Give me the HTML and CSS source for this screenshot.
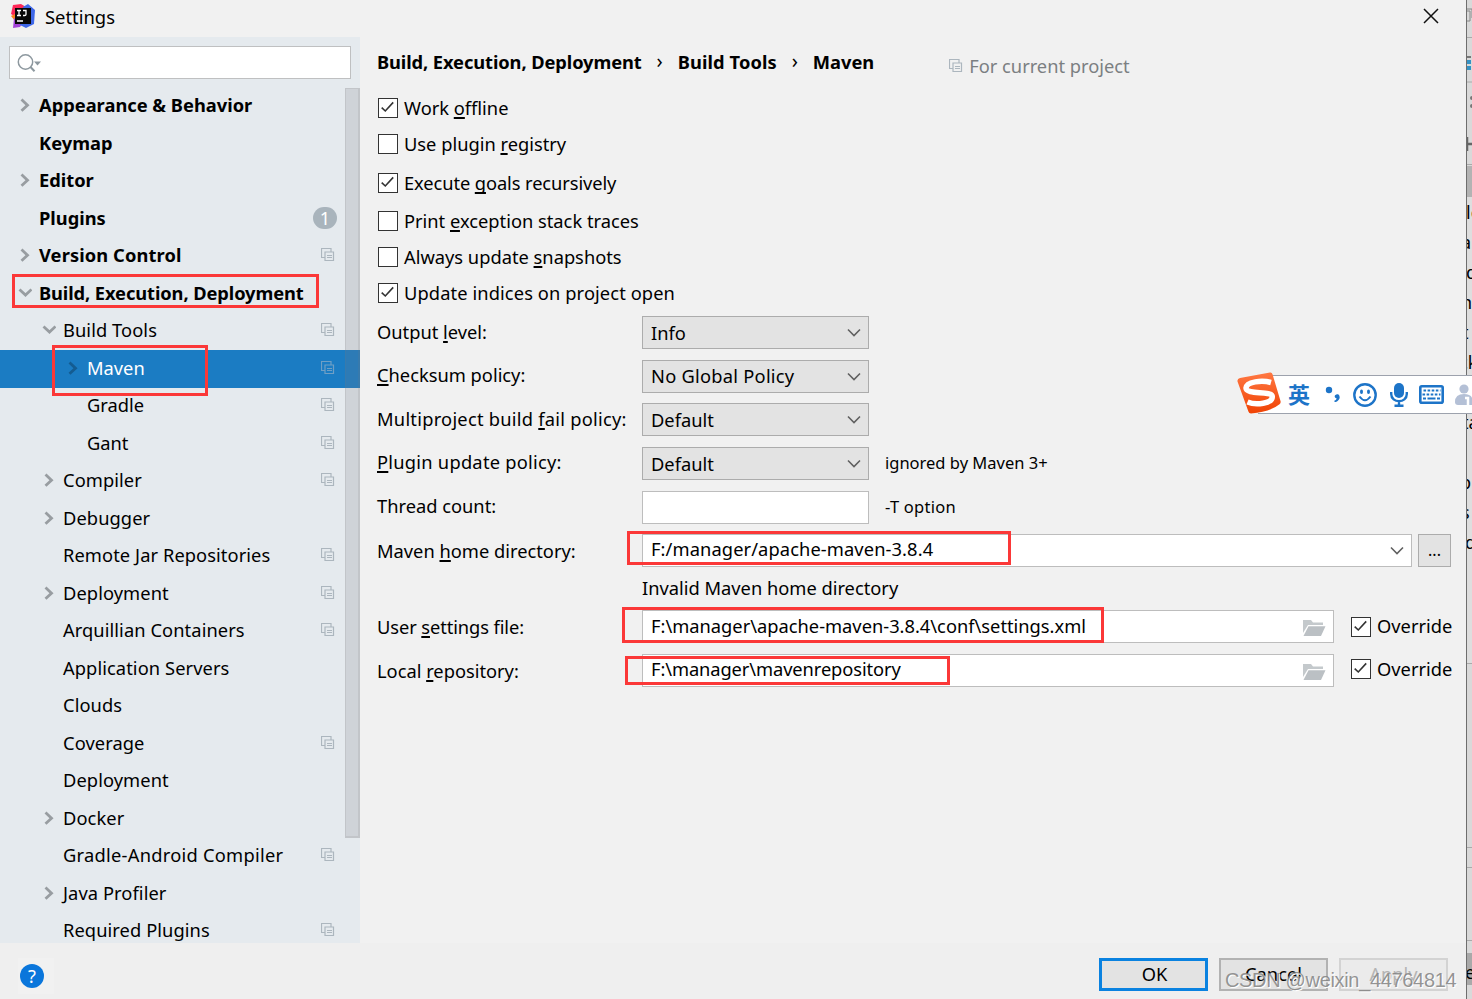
FILE: index.html
```html
<!DOCTYPE html>
<html lang="en">
<head>
<meta charset="utf-8">
<title>Settings</title>
<link rel="stylesheet" href="styles.css">
</head>
<body>
<svg class="defs" aria-hidden="true">
  <symbol id="right" viewBox="0 0 14 14"><path d="M3.500 1.600 9.500 7.200l-6 5.600" fill="none" stroke="currentColor" stroke-width="2.800"/></symbol>
  <symbol id="down" viewBox="0 0 14 14"><path d="M1.500 3.400 7.500 9l6-5.600" fill="none" stroke="currentColor" stroke-width="2.800"/></symbol>
  <symbol id="copy" viewBox="0 0 14 14"><path d="M3.500 9.500H.5v-9h9.500v3M4 4h8.500v8.500H4zM6 7.500h5M6 9.500h5" fill="none" stroke="currentColor" stroke-width="1.200"/></symbol>
  <symbol id="check" viewBox="0 0 20 20"><path d="M3 9.500 7 13.300 15.800 3.800" fill="none" stroke="#333" stroke-width="1.800"/></symbol>
  <symbol id="arrow" viewBox="0 0 14 9"><path d="M1 1.500l6 6 6-6" fill="none" stroke="#606060" stroke-width="1.600"/></symbol>
  <symbol id="folder" viewBox="0 0 24 18"><path d="M1 1h8l2 2.500h10V6H6L1 14z" fill="#c4c9cc"/><path d="M6.500 7.200H23.500L19 17H1.500z" fill="#bbc0c4"/></symbol>
</svg>
<div class="dialog">
  <header class="titlebar">
    <svg class="logo" viewBox="0 0 24 24">
      <path d="M2 1 10 0l5 3L5 13 0 10z" fill="#fe2857"/><path d="M0 12l4-2v7z" fill="#fc801d"/><path d="M3 14l8 6-2 3-7 1z" fill="#a445d8"/><path d="M12 3l5-3 7 6-1 14-8 4-6-3z" fill="#3e67e8"/>
      <path d="M4 4h16v16H4z" fill="#080808"/><path d="M6 6.500h4M8 6.500v5M6 11.500h4M12 6.500h3v4q0 1-1.500 1h-1.500M6 17h6" fill="none" stroke="#fff" stroke-width="1.300"/>
    </svg>
    <h1>Settings</h1>
    <svg class="close" viewBox="0 0 16 16"><path d="M1 1l14 14M15 1 1 15" stroke="#111" stroke-width="1.500"/></svg>
  </header>
  <div class="body">
    <aside class="sidebar">
      <div class="search"><svg viewBox="0 0 26 20"><circle cx="8.500" cy="8" r="7.200" fill="none" stroke="#8d989f" stroke-width="1.500"/><path d="M13.500 13l4 4.200" stroke="#8d989f" stroke-width="2"/><path d="M17 7.500h7l-3.500 4z" fill="#8d989f"/></svg></div>
      <ul class="tree">
        <li class="top"><svg class="tw"><use href="#right"/></svg><span>Appearance &amp; Behavior</span></li>
        <li class="top"><i class="tw"></i><span>Keymap</span></li>
        <li class="top"><svg class="tw"><use href="#right"/></svg><span>Editor</span></li>
        <li class="top"><i class="tw"></i><span>Plugins</span><b class="badge">1</b></li>
        <li class="top"><svg class="tw"><use href="#right"/></svg><span class="loose">Version Control</span><svg class="cp"><use href="#copy"/></svg></li>
        <li class="top"><svg class="tw"><use href="#down"/></svg><span class="tight">Build, Execution, Deployment</span></li>
        <li class="sub"><svg class="tw"><use href="#down"/></svg><span>Build Tools</span><svg class="cp"><use href="#copy"/></svg></li>
        <li class="leaf selected"><svg class="tw"><use href="#right"/></svg><span>Maven</span><svg class="cp"><use href="#copy"/></svg></li>
        <li class="leaf"><i class="tw"></i><span>Gradle</span><svg class="cp"><use href="#copy"/></svg></li>
        <li class="leaf"><i class="tw"></i><span>Gant</span><svg class="cp"><use href="#copy"/></svg></li>
        <li class="sub"><svg class="tw"><use href="#right"/></svg><span>Compiler</span><svg class="cp"><use href="#copy"/></svg></li>
        <li class="sub"><svg class="tw"><use href="#right"/></svg><span>Debugger</span></li>
        <li class="sub"><i class="tw"></i><span>Remote Jar Repositories</span><svg class="cp"><use href="#copy"/></svg></li>
        <li class="sub"><svg class="tw"><use href="#right"/></svg><span>Deployment</span><svg class="cp"><use href="#copy"/></svg></li>
        <li class="sub"><i class="tw"></i><span>Arquillian Containers</span><svg class="cp"><use href="#copy"/></svg></li>
        <li class="sub"><i class="tw"></i><span>Application Servers</span></li>
        <li class="sub"><i class="tw"></i><span>Clouds</span></li>
        <li class="sub"><i class="tw"></i><span>Coverage</span><svg class="cp"><use href="#copy"/></svg></li>
        <li class="sub"><i class="tw"></i><span>Deployment</span></li>
        <li class="sub"><svg class="tw"><use href="#right"/></svg><span>Docker</span></li>
        <li class="sub"><i class="tw"></i><span class="wide">Gradle-Android Compiler</span><svg class="cp"><use href="#copy"/></svg></li>
        <li class="sub"><svg class="tw"><use href="#right"/></svg><span>Java Profiler</span></li>
        <li class="sub"><i class="tw"></i><span>Required Plugins</span><svg class="cp"><use href="#copy"/></svg></li>
      </ul>
      <div class="scrollbar"></div>
    </aside>
    <main class="content">
      <div class="crumbs">
        <b class="tight">Build, Execution, Deployment</b><i>›</i><b class="loose">Build Tools</b><i>›</i><b>Maven</b>
        <span class="scope"><svg class="cp"><use href="#copy"/></svg>For current project</span>
      </div>
      <div class="checks">
        <label><svg class="box"><use href="#check"/></svg><span>Work <u>o</u>ffline</span></label>
        <label><svg class="box"></svg><span>Use plugin <u>r</u>egistry</span></label>
        <label><svg class="box"><use href="#check"/></svg><span class="tight">Execute <u>g</u>oals recursively</span></label>
        <label><svg class="box"></svg><span>Print <u>e</u>xception stack traces</span></label>
        <label><svg class="box"></svg><span>Always update <u>s</u>napshots</span></label>
        <label><svg class="box"><use href="#check"/></svg><span class="loose">Update indices on project open</span></label>
      </div>
      <div class="form">
        <div class="row"><span class="name">Output <u>l</u>evel:</span><div class="field select">Info<svg class="arrow"><use href="#arrow"/></svg></div></div>
        <div class="row"><span class="name"><u>C</u>hecksum policy:</span><div class="field select wide">No Global Policy<svg class="arrow"><use href="#arrow"/></svg></div></div>
        <div class="row"><span class="name wide">Multiproject build <u>f</u>ail policy:</span><div class="field select">Default<svg class="arrow"><use href="#arrow"/></svg></div></div>
        <div class="row"><span class="name wide lift"><u>P</u>lugin update policy:</span><div class="field select">Default<svg class="arrow"><use href="#arrow"/></svg></div><small class="lift">ignored by Maven 3+</small></div>
        <div class="row"><span class="name">Thread count:</span><div class="field short"></div><small class="wide">-T option</small></div>
        <div class="row"><span class="name drop">Maven <u>h</u>ome directory:</span><div class="field home"><span class="loose">F:/manager/apache-maven-3.8.4</span><svg class="arrow"><use href="#arrow"/></svg></div><div class="browse">...</div></div>
        <div class="row error"><span class="name"></span><span class="lift">Invalid Maven home directory</span></div>
        <div class="row"><span class="name drop tight">User <u>s</u>ettings file:</span><div class="field path"><span class="drop">F:\manager\apache-maven-3.8.4\conf\settings.xml</span><svg class="folder"><use href="#folder"/></svg></div><label><svg class="box"><use href="#check"/></svg><span>Override</span></label></div>
        <div class="row"><span class="name drop2">Local <u>r</u>epository:</span><div class="field path"><span class="tight">F:\manager\mavenrepository</span><svg class="folder"><use href="#folder"/></svg></div><label class="lift"><svg class="box"><use href="#check"/></svg><span>Override</span></label></div>
      </div>
    </main>
  </div>
  <footer class="footer">
    <div class="helpbox"><span class="help">?</span></div>
    <div class="buttons"><div class="btn ok">OK</div><div class="btn">Cancel</div><div class="btn off">Apply</div></div>
  </footer>
</div>
<svg class="behind" viewBox="1466 0 6 999">
  <path d="M1466 0h6v999h-6z" fill="#d9d9d9"/>
  <path d="M1466 166h6v31h-6z" fill="#b3b3b3"/><path d="M1466 197h6v466h-6z" fill="#dedede"/>
  <path d="M1466 37.500h6M1466 82h6M1466 164.500h6M1466 663.500h6M1466 847.500h6M1466 867.500h6M1466 940.500h6" stroke="#aaa"/>
  <path d="M1466 953h6v32h-6z" fill="#a9a9a9"/>
  <path d="M1467 11h3v10h-3M1466 9h6v9" fill="none" stroke="#888"/>
  <path d="M1466 56h5v2h-5z" fill="#777"/><path d="M1467 60h4v4h-4zM1467 66h4v4h-4z" fill="#3592c4"/>
  <circle cx="1472" cy="98" r="2" fill="#777"/><circle cx="1472" cy="106" r="2" fill="#777"/>
  <path d="M1467 137v14M1467 144h5" stroke="#666" stroke-width="2.500"/>
  <g class="page-text"><text x="1466" y="219">le</text><text x="1461" y="249">a</text><text x="1466" y="279">d</text><text x="1461" y="309">n</text><text x="1462" y="339">t</text><text x="1459" y="369">ck</text><text x="1462" y="429">ta</text><text x="1460" y="489">p</text><text x="1461" y="519">s</text><text x="1465" y="549">d</text><text x="1465" y="979">e</text></g>
  <path d="M1466.500 0v999" stroke="#6e6e6e"/>
</svg>
<div class="mark m1"></div><div class="mark m2"></div><div class="mark m3"></div><div class="mark m4"></div><div class="mark m5"></div>
<div class="ime">
  <svg class="sogou" viewBox="0 0 44 42"><defs><linearGradient id="g" x2="0" y2="1"><stop stop-color="#ff7843"/><stop offset="1" stop-color="#f04304"/></linearGradient></defs>
    <path d="M3 6 33 .500q2-.3 2.500 1.700L43.500 29q.6 2-1 3.200Q33 40 14 41.500q-2 0-2.600-2L.5 9.500Q0 6.700 3 6z" fill="url(#g)"/>
    <path d="M34 10.500C25 8 9.500 9.500 9 16 8.800 23 35 18.500 35.300 24.500 35.500 31.500 19 33.500 10.500 30" fill="none" stroke="#fff" stroke-width="5.500"/></svg>
  <span class="lang">英</span>
  <svg class="punct" viewBox="0 0 16 18"><circle cx="4" cy="4" r="3.200" fill="#1d74c8"/><path d="M13.500 8.500c3 3-.2 7.500-4 7.500v-1.500c1.500-.4 2.200-1.400 2-2.300-3.500-.8-1.400-4.800 2-3.700z" fill="#1d74c8"/></svg>
  <svg class="smile" viewBox="0 0 24 24"><circle cx="12" cy="12" r="10.700" fill="none" stroke="#1d74c8" stroke-width="2.400"/><ellipse cx="8.500" cy="8.700" rx="1.500" ry="2.200" fill="#1d74c8"/><ellipse cx="15.500" cy="8.700" rx="1.500" ry="2.200" fill="#1d74c8"/><path d="M6.500 13.500q5.500 7.500 11 0" fill="none" stroke="#1d74c8" stroke-width="2"/></svg>
  <svg class="mic" viewBox="0 0 18 24"><rect x="4" width="10" height="15" rx="5" fill="#1d74c8"/><path d="M1.200 9v2c0 9.500 15.600 9.500 15.600 0V9M9 18v4M4.500 22.800h9" fill="none" stroke="#1d74c8" stroke-width="2.400"/></svg>
  <svg class="keys" viewBox="0 0 25 19"><rect x="1.300" y="1.300" width="22.400" height="16.400" rx="1.500" fill="#fff" stroke="#1d74c8" stroke-width="2.600"/><path d="M4.500 5.500h17M3.500 9.500h18" stroke="#1d74c8" stroke-width="2.200" stroke-dasharray="2.600 1.500"/><path d="M4 13.500h3M8.500 13.500h8M18 13.500h3" stroke="#1d74c8" stroke-width="2"/></svg>
  <svg class="user" viewBox="0 0 17 22"><circle cx="9" cy="5" r="4.600" fill="#b4c0d6"/><path d="M0 18q0-8 9-8t9 8v3H3q-3 0-3-3z" fill="#b4c0d6"/><path d="M10 14h3v7" fill="none" stroke="#fff" stroke-width="2.500"/></svg>
</div>
<div class="watermark">CSDN @weixin_44764814</div>
</body>
</html>
```
FILE: styles.css
```css
* { box-sizing: border-box; }
body { margin: 0; width: 1472px; height: 999px; overflow: hidden; position: relative; background: #f1f1f1; color: #000; font: 18.3px/24px "Noto Sans", "Open Sans", sans-serif; }
svg { display: block; flex: none; }
.defs { position: absolute; width: 0; height: 0; }
u { text-decoration: underline; text-decoration-thickness: 1.5px; text-underline-offset: 2px; text-decoration-skip-ink: none; }
i { font-style: normal; }
.tight { letter-spacing: -.09px; }
.loose { letter-spacing: .1px; }
.wide { letter-spacing: .25px; }

.dialog { width: 1466px; height: 999px; display: flex; flex-direction: column; }
.titlebar { height: 37px; flex: none; display: flex; align-items: center; padding: 0 27px 5px 11px; }
.logo { width: 24px; height: 24px; }
.titlebar h1 { margin: 0 auto 0 10px; font-size: 18.4px; font-weight: 400; padding-top: 2px; }
.close { width: 16px; height: 16px; }
.body { display: flex; height: 906px; flex: none; }

.sidebar { width: 360px; flex: none; background: #e5eaee; position: relative; overflow: hidden; padding-top: 9px; }
.search { height: 33px; width: 342px; margin-left: 9px; border: 1.500px solid #bfc0c1; background: #fff; padding: 7px 7px; }
.search svg { width: 26px; height: 20px; }
.tree { list-style: none; margin: 8.500px 0 0; padding: 0; }
.tree li { height: 37.500px; display: flex; align-items: center; padding: 0 25px 2px 18px; }
.tree .sub { padding-left: 42px; letter-spacing: .08px; }
.tree .sub .wide { letter-spacing: .26px; }
.tree .leaf { padding-left: 66px; }
.tree .top { font-weight: 700; }
.tree li span { white-space: nowrap; }
.tw { width: 14px; height: 14px; margin-right: 7px; flex: none; color: #989da1; }
.cp { width: 14px; height: 14px; color: #acb6be; }
.tree .cp { margin-left: auto; }
.tree .selected { background: #1b7cc3; color: #fff; }
.selected .tw { color: #145c91; }
.selected .cp { color: #6f9fc5; }
.badge { margin-left: auto; margin-right: -2px; width: 24px; height: 22px; border-radius: 11px; background: #a9b4bc; color: #fff; font-weight: 400; line-height: 22px; text-align: center; }
.scrollbar { position: absolute; right: 0; top: 51px; width: 15px; height: 750px; background: rgba(120, 120, 130, .2); border: 1px solid rgba(120, 120, 120, .15); border-width: 1px 2px 2px 1px; }

.content { flex: 1; padding-left: 17px; }
.crumbs { display: flex; align-items: center; height: 53px; font-size: 18.3px; padding-bottom: 4px; white-space: nowrap; }
.crumbs i { width: 36px; text-align: center; padding-bottom: 2px; font-size: 20px; }
.scope { display: flex; align-items: center; gap: 6px; margin-left: 75px; color: #7b7f82; padding-top: 8px; }
.checks { display: grid; grid-template-rows: 36px 36px 42px 34px 38px 34px; }
label { display: flex; align-items: center; gap: 6px; }
label > span { padding-bottom: 1px; }
.box { width: 20px; height: 20px; border: 1.500px solid #333; background: #fff; margin-left: 1px; }
.form { margin-top: 1px; }
.row { display: flex; align-items: center; height: 43.600px; white-space: nowrap; }
.error { height: 32.500px; }
.name { width: 265px; flex: none; padding-bottom: 2px; }
.field { height: 33px; border: 1.500px solid #bdbdbd; background: #fff; padding: 0 7px 0 8px; display: flex; align-items: center; justify-content: space-between; }
.field > span { padding-bottom: 3px; }
.field > .drop { padding-bottom: 1px; }
.select { width: 227px; background: #e3e3e3; border-color: #acacac; }
.short { width: 227px; }
.select + small, .short + small { margin-left: 16px; }
.home { width: 770px; }
.path { width: 692px; }
.path + label { margin-left: 16px; }
.arrow { width: 14px; height: 9px; }
.folder { width: 24px; height: 18px; margin-top: 3px; }
.row small { font-size: 16.500px; }
.browse { width: 33px; height: 33px; margin-left: 6px; border: 1.500px solid #acacac; background: #e3e3e3; text-align: center; line-height: 30px; font-size: 16px; }
.name.lift { padding-bottom: 4px; }
.name.drop { padding-bottom: 0; }
.name.drop2 { padding-top: 2px; padding-bottom: 0; }
small.lift, .error .lift, label.lift { padding-bottom: 2px; }

.footer { flex: 1; background: #efefef; display: flex; align-items: flex-start; justify-content: space-between; padding: 15px 18px 0 18px; }
.helpbox { width: 36px; height: 36px; padding: 6px 2px; background: #f1f1f1; }
.help { display: block; width: 24px; height: 24px; border-radius: 50%; background: #0a76db; color: #fff; text-align: center; }
.buttons { display: flex; gap: 11px; }
.btn { width: 109px; height: 33px; border: 2px solid #b2b2b2; background: #e3e3e3; text-align: center; line-height: 28px; }
.ok { border: 3px solid #0a82e0; line-height: 26px; padding-left: 2px; }
.off { background: #ebebeb; border-color: #d3d3d3; color: #b4b4b4; }

.behind { position: absolute; left: 1466px; top: 0; width: 6px; height: 999px; }
.page-text { font: 18px "Noto Sans", sans-serif; }
.mark { position: absolute; border: 3px solid #fb3838; }
.m1 { left: 12px; top: 274px; width: 307px; height: 34px; }
.m2 { left: 52px; top: 345px; width: 156px; height: 51px; }
.m3 { left: 627px; top: 531px; width: 384px; height: 34px; }
.m4 { left: 622px; top: 607px; width: 482px; height: 36px; }
.m5 { left: 625px; top: 656px; width: 325px; height: 29px; }

.ime { position: absolute; left: 1258px; top: 375px; width: 214px; height: 39px; border: 1px solid #9da2ad; border-width: 1px 0; background: #fff; display: flex; align-items: center; overflow: visible; }
.sogou { width: 44px; height: 42px; margin-left: -21px; margin-top: -3px; }
.lang { font: 700 22px/24px "Noto Sans CJK SC", sans-serif; color: #1d74c8; width: 22px; margin-left: 7px; padding-bottom: 3px; }
.punct { width: 16px; height: 18px; margin-left: 15px; }
.smile { width: 24px; height: 24px; margin-left: 12px; }
.mic { width: 18px; height: 24px; margin-left: 13px; }
.keys { width: 25px; height: 19px; margin-left: 11px; }
.user { width: 17px; height: 22px; margin-left: 11px; }
.watermark { position: absolute; left: 1225px; top: 968px; font: 20px/24px "Liberation Sans", Arial, sans-serif; letter-spacing: -.33px; color: rgba(130, 130, 130, .85); text-shadow: 1px 1px 0 #fff; white-space: nowrap; }
```
